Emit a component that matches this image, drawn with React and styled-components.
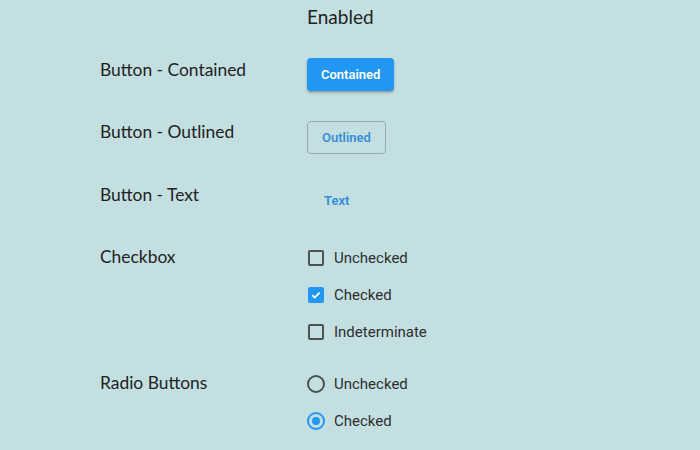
import styled, { createGlobalStyle } from "styled-components";

const GlobalStyle = createGlobalStyle`
  html, body {
    margin: 0;
    padding: 0;
    background: #c4dfe1;
  }
  body {
    font-family: Roboto, "Liberation Sans", sans-serif;
  }
`;

const Page = styled.div`
  min-height: 450px;
  padding-left: 100px;
  display: flex;
  flex-direction: column;
`;

const Row = styled.div`
  display: grid;
  grid-template-columns: 207px auto;
  align-items: start;
  margin-top: ${props => props.$gap || 0}px;
`;

const Label = styled.div`
  font-family: Lato, "Open Sans", sans-serif;
  font-size: 17.4px;
  line-height: 20px;
  color: #222;
  padding-top: ${props => props.$pad || 0}px;
`;

const Heading = styled.div`
  font-family: Lato, "Open Sans", sans-serif;
  font-size: 19px;
  line-height: 34px;
  color: #222;
`;

const Stack = styled.div`
  display: flex;
  flex-direction: column;
  align-items: flex-start;
`;

const Button = styled.button`
  font-family: Roboto, "Liberation Sans", sans-serif;
  font-size: 13px;
  font-weight: 600;
  height: 33px;
  border-radius: 4px;
  cursor: pointer;
  ${props => props.$variant === "contained"
    ? `background: #2196f3;
       color: #fff;
       border: none;
       padding: 0 14px;
       box-shadow: 0 2px 3px rgba(0,0,0,0.22), 0 1px 1px rgba(0,0,0,0.12);`
    : props.$variant === "outlined"
    ? `background: transparent;
       color: #3a8fd6;
       border: 1px solid #9aa9ac;
       padding: 0 14px;`
    : `background: transparent;
       color: #2f8fdc;
       border: none;
       padding: 0 17px;`
  }
`;

const Option = styled.label`
  display: flex;
  align-items: center;
  height: 37px;
  gap: ${props => props.$radio ? 9 : 10}px;
  font-size: 15px;
  color: #2e2e2e;
  cursor: pointer;
`;

const Box = styled.span`
  width: 16px;
  height: 16px;
  margin-left: 1px;
  box-sizing: border-box;
  border-radius: 2px;
  display: flex;
  align-items: center;
  justify-content: center;
  ${props => props.$checked
    ? `background: #2196f3; border: none;`
    : `border: 2px solid #4a5152;`
  }
`;

const Circle = styled.span`
  width: 18px;
  height: 18px;
  box-sizing: border-box;
  border-radius: 50%;
  display: flex;
  align-items: center;
  justify-content: center;
  border: 2px solid ${props => props.$checked ? "#2196f3" : "#4a5152"};

  &::after {
    content: "";
    width: 8px;
    height: 8px;
    border-radius: 50%;
    background: ${props => props.$checked ? "#2196f3" : "transparent"};
  }
`;

function Checkbox({ checked, children }) {
  return (
    <Option>
      <Box $checked={checked}>
        {checked && (
          <svg width="12" height="12" viewBox="0 0 12 12">
            <path d="M2.3 6.2l2.4 2.4 5-5" fill="none" stroke="#fff" strokeWidth="1.8" />
          </svg>
        )}
      </Box>
      {children}
    </Option>
  );
}

function Radio({ checked, children }) {
  return (
    <Option $radio>
      <Circle $checked={checked} />
      {children}
    </Option>
  );
}

export default function App() {
  return (
    <>
      <GlobalStyle />
      <Page>
        <Row>
          <span />
          <Heading>Enabled</Heading>
        </Row>
        <Row $gap={24}>
          <Label $pad={2}>Button - Contained</Label>
          <Stack><Button $variant="contained">Contained</Button></Stack>
        </Row>
        <Row $gap={30}>
          <Label $pad={1}>Button - Outlined</Label>
          <Stack><Button $variant="outlined">Outlined</Button></Stack>
        </Row>
        <Row $gap={30}>
          <Label $pad={1}>Button - Text</Label>
          <Stack><Button>Text</Button></Stack>
        </Row>
        <Row $gap={22}>
          <Label $pad={8}>Checkbox</Label>
          <Stack>
            <Checkbox>Unchecked</Checkbox>
            <Checkbox checked>Checked</Checkbox>
            <Checkbox>Indeterminate</Checkbox>
          </Stack>
        </Row>
        <Row $gap={15}>
          <Label $pad={8}>Radio Buttons</Label>
          <Stack>
            <Radio>Unchecked</Radio>
            <Radio checked>Checked</Radio>
          </Stack>
        </Row>
      </Page>
    </>
  );
}
